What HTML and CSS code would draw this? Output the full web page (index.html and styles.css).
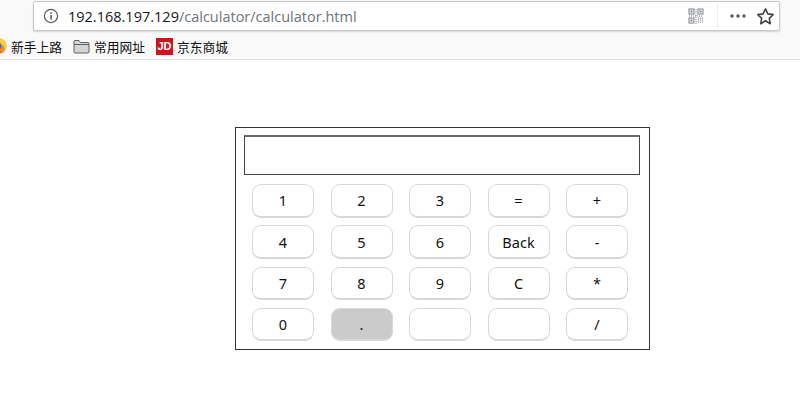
FILE: index.html
```html
<!DOCTYPE html>
<html lang="en">
<head>
  <meta charset="UTF-8">
  <meta name="viewport" content="width=device-width, initial-scale=1.0">
  <title>Calculator</title>
  <link rel="stylesheet" href="styles.css">
</head>
<body>
  <!-- Browser toolbar -->
  <header class="chrome">
    <div class="urlbar">
      <svg class="icon-info" width="16" height="16" viewBox="0 0 16 16">
        <circle cx="8" cy="8" r="6.6" fill="none" stroke="#555" stroke-width="1.2"/>
        <rect x="7.3" y="7" width="1.5" height="4.6" fill="#555"/>
        <rect x="7.3" y="4.2" width="1.5" height="1.6" fill="#555"/>
      </svg>
      <span class="url"><span class="url-host">192.168.197.129</span>/calculator/calculator.html</span>
      <svg class="icon-qr" width="16" height="16" viewBox="0 0 16 16" fill="none" stroke="#7a7f88">
        <rect x="1" y="1" width="5" height="5"/>
        <rect x="10" y="1" width="5" height="5"/>
        <rect x="1" y="10" width="5" height="5"/>
        <rect x="3" y="3" width="1" height="1" fill="#7a7f88"/>
        <rect x="12" y="3" width="1" height="1" fill="#7a7f88"/>
        <rect x="3" y="12" width="1" height="1" fill="#7a7f88"/>
        <path d="M8 1v7M1 8h14M8 9v7M10 10h6M10 12h6M10 14h6" stroke-dasharray="1 1"/>
      </svg>
      <span class="divider"></span>
      <svg class="icon-dots" width="16" height="4" viewBox="0 0 16 4" fill="#555">
        <circle cx="2" cy="2" r="1.7"/><circle cx="8" cy="2" r="1.7"/><circle cx="14" cy="2" r="1.7"/>
      </svg>
      <svg class="icon-star" width="19" height="19" viewBox="0 0 18 18">
        <path d="M9 1.8l2.2 4.700 5.100.7-3.700 3.600.9 5.100L9 13l-4.500 2.900.9-5.100L1.700 7.200l5.100-.7z" fill="none" stroke="#444" stroke-width="1.5" stroke-linejoin="round"/>
      </svg>
    </div>
    <nav class="bookmarks">
      <a class="bookmark">
        <svg width="16" height="16" viewBox="0 0 16 16">
          <circle cx="8" cy="8" r="7.500" fill="#f58a1f"/>
          <path d="M8 .5a7.500 7.500 0 0 1 7.500 7.500c0 2-1 3.500-2 4.500 .5-3-1-6-5.500-6.500z" fill="#ffcb3a"/>
          <path d="M2 12a7.500 7.500 0 0 0 10 2c-3 0-7-.5-10-2z" fill="#e5452c"/>
          <circle cx="7" cy="8" r="3.500" fill="#3f6fd1"/>
        </svg>
        新手上路
      </a>
      <a class="bookmark">
        <svg width="17" height="15" viewBox="0 0 17 15">
          <path d="M1 13V2.500A1 1 0 0 1 2 1.500h4l1.500 2H15a1 1 0 0 1 1 1V13a1 1 0 0 1-1 1H2a1 1 0 0 1-1-1z" fill="#d4d4d4" stroke="#5f5f5f"/>
          <path d="M1 5.500h15" stroke="#5f5f5f"/>
        </svg>
        常用网址
      </a>
      <a class="bookmark">
        <span class="jd-logo">JD</span>
        京东商城
      </a>
    </nav>
  </header>

  <!-- Calculator -->
  <main class="page">
    <form class="calculator">
      <input class="display" type="text">
      <div class="keys">
        <button type="button" class="key">1</button>
        <button type="button" class="key">2</button>
        <button type="button" class="key">3</button>
        <button type="button" class="key">=</button>
        <button type="button" class="key">+</button>
        <button type="button" class="key">4</button>
        <button type="button" class="key">5</button>
        <button type="button" class="key">6</button>
        <button type="button" class="key">Back</button>
        <button type="button" class="key">-</button>
        <button type="button" class="key">7</button>
        <button type="button" class="key">8</button>
        <button type="button" class="key">9</button>
        <button type="button" class="key">C</button>
        <button type="button" class="key">*</button>
        <button type="button" class="key">0</button>
        <button type="button" class="key key-active">.</button>
        <button type="button" class="key"></button>
        <button type="button" class="key"></button>
        <button type="button" class="key">/</button>
      </div>
    </form>
  </main>
</body>
</html>
```
FILE: styles.css
```css
/* Global Styles */
html, body {
  margin: 0;
  height: 100%;
  overflow: hidden;
}

body {
  background: #fff;
}

/* Browser toolbar */
.chrome {
  height: 58px;
  background: #f9f9fa;
  border-bottom: 1px solid #e3e3e3;
  padding: 1px 20px 0 33px;
}

.urlbar {
  display: flex;
  align-items: center;
  box-sizing: border-box;
  height: 30px;
  background: #fff;
  border: 1px solid #c8c8ca;
  border-radius: 2px;
  box-shadow: 0 1px 2px rgba(0, 0, 0, 0.15);
  padding: 0 3px 0 9px;
}

.url {
  margin-left: 9px;
  font-family: "Open Sans", sans-serif;
  font-size: 14.5px;
  color: #6f7378;
  flex: 1;
}

.url-host {
  color: #17181a;
}

.icon-qr {
  margin-right: 13px;
}

.divider {
  width: 1px;
  height: 24px;
  background: #ececec;
  margin-right: 12px;
}

.icon-dots {
  margin-right: 10px;
}

.icon-star {
  margin-right: 1px;
}

/* Bookmarks */
.bookmarks {
  display: flex;
  align-items: center;
  height: 30px;
  margin-left: -42px;
  gap: 11px;
}

.bookmark {
  display: flex;
  align-items: center;
  gap: 4px;
  font-family: "Noto Sans CJK SC", sans-serif;
  font-size: 12.75px;
  color: #111;
}

.jd-logo {
  width: 17px;
  height: 17px;
  background: #c8161d;
  color: #fff;
  font-family: "Liberation Sans", sans-serif;
  font-size: 11px;
  font-weight: bold;
  line-height: 17px;
  text-align: center;
}

/* Calculator */
.page {
  padding: 67px 0 0 235px;
}

.calculator {
  box-sizing: border-box;
  width: 415px;
  height: 223px;
  border: 1px solid #333;
  padding: 7px 9px 0 8px;
}

.display {
  display: block;
  box-sizing: border-box;
  width: 396px;
  height: 40px;
  margin: 0;
  background: #fff;
  border: 1px solid #444;
  border-top: 2px solid #6b6b6b;
  padding: 0;
}

.keys {
  display: grid;
  grid-template-columns: repeat(5, 62px);
  grid-auto-rows: 33.5px;
  column-gap: 16.5px;
  row-gap: 7.8px;
  padding: 9px 0 0 8px;
}

.key {
  box-sizing: border-box;
  margin: 0;
  padding: 0;
  background: #fff;
  border: 1px solid #d8d8d8;
  border-bottom-width: 2px;
  border-radius: 9px;
  font-family: "Noto Sans", sans-serif;
  font-size: 14.5px;
  color: #111;
}

.key-active {
  background: #cbcbcb;
}
```
